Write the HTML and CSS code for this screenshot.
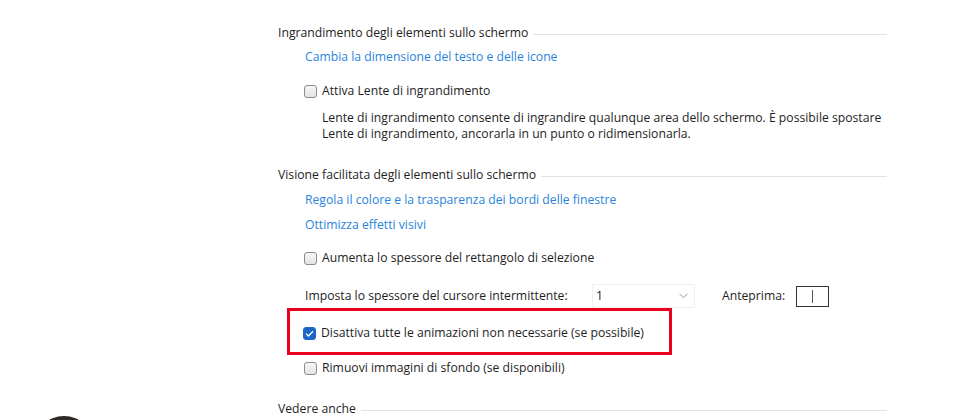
FILE: index.html
```html
<!DOCTYPE html>
<html lang="it">
<head>
<meta charset="utf-8">
<link rel="stylesheet" href="styles.css">
</head>
<body>
<div class="panel">
  <div class="section-head h1"><span>Ingrandimento degli elementi sullo schermo</span></div>
  <div class="indent">
    <a class="link l1">Cambia la dimensione del testo e delle icone</a>
    <label class="check c1"><span class="box"></span><span>Attiva Lente di ingrandimento</span></label>
    <p class="desc">Lente di ingrandimento consente di ingrandire qualunque area dello schermo. È possibile spostare<br>Lente di ingrandimento, ancorarla in un punto o ridimensionarla.</p>
  </div>

  <div class="section-head h2"><span>Visione facilitata degli elementi sullo schermo</span></div>
  <div class="indent">
    <a class="link l2">Regola il colore e la trasparenza dei bordi delle finestre</a>
    <a class="link l3">Ottimizza effetti visivi</a>
    <label class="check c2"><span class="box"></span><span>Aumenta lo spessore del rettangolo di selezione</span></label>
    <div class="cursor-row">
      <span class="cursor-label">Imposta lo spessore del cursore intermittente:</span>
      <div class="select"><span>1</span>
        <svg class="chev" width="9" height="6" viewBox="0 0 9 6"><path d="M0.5 0.8 L4.5 4.8 L8.5 0.8" fill="none" stroke="#9a9a9a" stroke-width="1"/></svg>
      </div>
      <span class="preview-label">Anteprima:</span>
      <div class="preview"><span class="caret"></span></div>
    </div>
  </div>
  <div class="highlight">
    <label class="check"><span class="box checked"><svg width="9" height="7" viewBox="0 0 9 7"><path d="M1 3.6 L3.4 6 L8 1.2" fill="none" stroke="#fff" stroke-width="1.3"/></svg></span><span>Disattiva tutte le animazioni non necessarie (se possibile)</span></label>
  </div>
  <div class="indent">
    <label class="check c4"><span class="box"></span><span>Rimuovi immagini di sfondo (se disponibili)</span></label>
  </div>

  <div class="section-head h3"><span>Vedere anche</span></div>
</div>
<div class="avatar-clip"><div class="avatar"></div></div>
</body>
</html>
```
FILE: styles.css
```css
html, body {
  margin: 0;
  padding: 0;
  background: #ffffff;
  overflow: hidden;
}
body {
  width: 980px;
  height: 420px;
  position: relative;
  font-family: "Open Sans", "Noto Sans", sans-serif;
  font-size: 12.2px;
  line-height: 16px;
  color: #1e1e1e;
}
.panel {
  margin-left: 278px;
  width: 609px;
  padding-top: 25px;
}
.section-head {
  display: flex;
  align-items: center;
  gap: 5px;
  height: 16px;
}
.section-head::after {
  content: "";
  flex: 1;
  height: 1px;
  background: #e2e2e2;
  margin-top: 2px;
}
.h2 { margin-top: 25px; }
.h3 { margin-top: 25px; }
.indent {
  padding-left: 27px;
}
.link {
  display: block;
  color: #2a84dc;
  height: 16px;
}
.l1 { margin-top: 8px; }
.l2 { margin-top: 9px; }
.l3 { margin-top: 9px; }
.check {
  display: flex;
  align-items: center;
  gap: 5px;
  height: 16px;
}
.c1 { margin-top: 18px; }
.c2 { margin-top: 17px; }
.c4 { margin-top: 5px; }
.box {
  width: 11px;
  height: 11px;
  border: 1px solid #8c8c8c;
  border-radius: 3px;
  background: linear-gradient(#f6f6f6, #e4e4e4);
  display: flex;
  align-items: center;
  justify-content: center;
  margin-left: -1px;
}
.box.checked {
  background: #1b66c9;
  border-color: #1b66c9;
}
.desc {
  margin: 11px 0 0 17px;
}
.cursor-row {
  display: flex;
  align-items: center;
  height: 24px;
  margin-top: 18px;
}
.cursor-label {
  width: 287px;
}
.select {
  display: flex;
  align-items: center;
  justify-content: space-between;
  padding: 0 6px 0 3px;
  box-sizing: border-box;
  width: 103px;
  height: 24px;
  border: 1px solid #f0f0f0;
}
.preview-label {
  margin-left: 27px;
  width: 74px;
}
.preview {
  width: 33px;
  height: 21px;
  box-sizing: border-box;
  border: 1px solid #333;
  display: flex;
  align-items: center;
  justify-content: center;
}
.caret {
  width: 1px;
  height: 13px;
  background: #555;
}
.highlight {
  margin-left: 9px;
  width: 385px;
  height: 47px;
  box-sizing: border-box;
  border: 3px solid #e8001c;
  padding: 14px 0 0 14px;
}
.avatar-clip {
  position: absolute;
  left: 34px;
  top: 416px;
  width: 60px;
  height: 4px;
  overflow: hidden;
}
.avatar {
  width: 60px;
  height: 60px;
  border-radius: 50%;
  background: #2e2a27;
}
```
